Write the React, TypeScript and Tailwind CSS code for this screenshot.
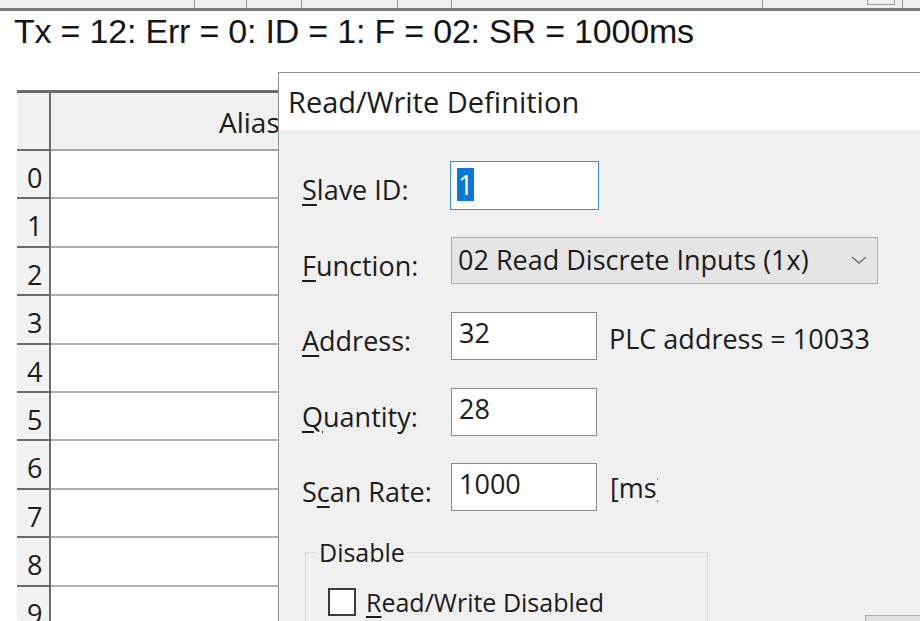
import React from 'react';

const ROWS = [0, 1, 2, 3, 4, 5, 6, 7, 8, 9];
const STRIP_CELLS = ['w-[195px]', 'w-[52px]', 'w-[55px]', 'w-[96px]', 'w-[54px]', 'w-[311px]', 'w-[140px]'];

function TextBox({ value, width = 'w-[146px]' }: { value: string; width?: string }) {
  return (
    <div className={`${width} h-[48px] shrink-0 bg-white border border-[#8a8a8a] pl-[7px] pt-[1px] leading-[38px]`}>
      {value}
    </div>
  );
}

function Label({ children }: { children: React.ReactNode }) {
  return <div className="w-[149px] pt-[10px] leading-[38px] shrink-0">{children}</div>;
}

function Key({ children }: { children: React.ReactNode }) {
  return <span className="underline underline-offset-[4px] decoration-[1.5px]">{children}</span>;
}

export default function App() {
  return (
    <div className="relative w-[920px] h-[621px] overflow-hidden bg-white">
      {/* toolbar strip */}
      <div className="flex h-[11px] bg-[#efefef] border-b-[3px] border-[#7d7d7d]">
        {STRIP_CELLS.map((w, i) => (
          <div key={i} className={`${w} h-full border-r border-[#9a9a9a]`} />
        ))}
        <div className="ml-[-36px] w-[28px] h-[5px] border border-[#9a9a9a] border-t-0" />
      </div>

      {/* status line */}
      <div className="h-[79px] pl-[14px] pt-[2px] font-['Liberation_Sans',Arial,sans-serif] text-[34px] leading-[37px] text-[#141414] tracking-[-0.2px]">
        Tx = 12: Err = 0: ID = 1: F = 02: SR = 1000ms
      </div>

      {/* grid */}
      <div className="ml-[17px] w-[300px] border-t-[3px] border-[#6b6b6b] font-['Open_Sans',sans-serif] text-[27px] text-[#1b1b1b]">
        <div className="flex h-[58px]">
          <div className="w-[34px] bg-[#f0f0f0] border-r-2 border-b-2 border-[#6b6b6b]" />
          <div className="flex-1 bg-[#f0f0f0] border-b-2 border-[#a5a5a5] pl-[168px] pt-[4px] leading-[50px] text-[28px]">
            Alias
          </div>
        </div>
        {ROWS.map((r) => (
          <div key={r} className="flex h-[48.4px]">
            <div className="w-[34px] bg-[#f2f2f2] border-r-2 border-b-2 border-[#6b6b6b] pl-[10px] pt-[7px] leading-[40px]">
              {r}
            </div>
            <div className="flex-1 bg-white border-b-2 border-[#b0b0b0]" />
          </div>
        ))}
      </div>

      {/* dialog window */}
      <div className="absolute left-[278px] top-[72px] w-[680px] h-[600px] border border-[#8f8f8f] bg-[#f0f0f0] flex flex-col font-['Open_Sans',sans-serif] text-[#1b1b1b]">
        <div className="h-[57px] bg-white pl-[9px] pt-[9px] text-[29px] leading-[40px]">
          Read/Write Definition
        </div>

        <div className="flex-1 pl-[23px] pt-[31px] text-[27px]">
          <div className="flex flex-col gap-[27.5px]">
            <div className="flex h-[48px]">
              <Label>
                <Key>S</Key>lave ID:
              </Label>
              <div className="ml-[-1px] w-[149px] h-[49px] shrink-0 bg-white border border-[#3f8fd6] pl-[6px] pt-[3px]">
                <span className="inline-block h-[33px] leading-[33px] px-[1px] bg-[#0a78d7] text-white">1</span>
              </div>
            </div>

            <div className="flex h-[48px]">
              <Label>
                <Key>F</Key>unction:
              </Label>
              <div className="w-[427px] h-[47px] shrink-0 bg-[#e5e5e5] border border-[#adadad] flex items-center justify-between pl-[6px] pr-[9px]">
                <span className="leading-[38px]">02 Read Discrete Inputs (1x)</span>
                <svg width="18" height="10" viewBox="0 0 18 10" fill="none" stroke="#6e6e6e" strokeWidth="1.4">
                  <polyline points="2,2 9,8 16,2" />
                </svg>
              </div>
            </div>

            <div className="flex h-[48px]">
              <Label>
                <Key>A</Key>ddress:
              </Label>
              <TextBox value="32" />
              <div className="ml-[12px] pt-[8px] leading-[38px] whitespace-nowrap">PLC address = 10033</div>
            </div>

            <div className="flex h-[48px]">
              <Label>
                <Key>Q</Key>uantity:
              </Label>
              <TextBox value="28" />
            </div>

            <div className="flex h-[48px]">
              <Label>
                S<Key>c</Key>an Rate:
              </Label>
              <TextBox value="1000" />
              <div className="ml-[13px] w-[48px] overflow-hidden whitespace-nowrap pt-[6px] leading-[38px]">[ms]</div>
            </div>
          </div>

          <div className="flex mt-[22px]">
            <fieldset className="ml-[3px] w-[403px] h-[130px] shrink-0 border border-solid border-[#d8d8d8] pl-[11px] text-[25px]">
              <legend className="px-[2px] leading-[38px]">Disable</legend>
              <div className="flex items-center ml-[11px] mt-[12px]">
                <div className="w-[28px] h-[28px] shrink-0 bg-white border-2 border-[#3a3a3a]" />
                <span className="ml-[10px] leading-[38px] whitespace-nowrap">
                  <Key>R</Key>ead/Write Disabled
                </span>
              </div>
            </fieldset>
            <div className="ml-[157px] mt-[82px] w-[120px] h-[44px] shrink-0 bg-[#e1e1e1] border border-[#adadad]" />
          </div>
        </div>
      </div>
    </div>
  );
}
